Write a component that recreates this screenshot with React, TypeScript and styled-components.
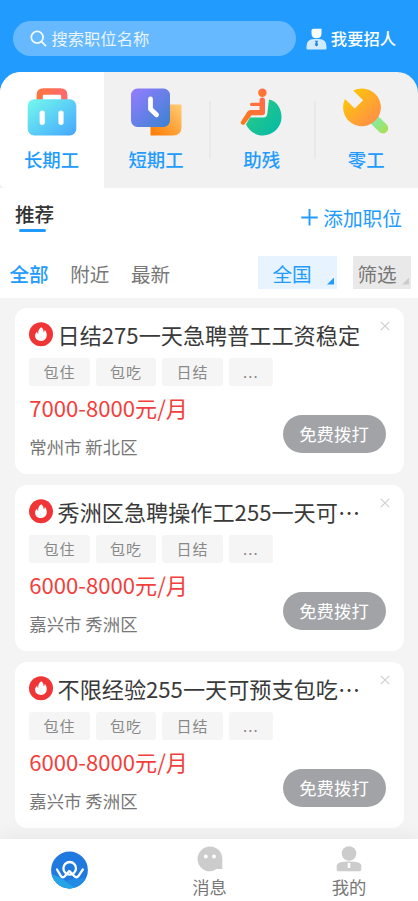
import React from "react";
import styled, { createGlobalStyle } from "styled-components";

const BLUE = "#229bff";

const GlobalStyle = createGlobalStyle`
  * { box-sizing: border-box; }
  body { margin: 0; background: #fff; }
  body, button { font-family: "Noto Sans CJK SC", "Noto Sans", sans-serif; }
  button { border: 0; padding: 0; margin: 0; background: none; color: inherit; }
  svg { display: block; flex: none; }
`;

const Page = styled.div`
  width: 418px;
  height: 901px;
  display: flex;
  flex-direction: column;
  overflow: hidden;
  background: #f4f4f4;
`;

const Header = styled.header`
  flex: none;
  background: ${BLUE};
`;

const SearchBar = styled.div`
  height: 72px;
  padding: 21px 22px 0 13px;
  display: flex;
  align-items: flex-start;
  justify-content: space-between;
`;

const SearchField = styled.div`
  width: 282.5px;
  height: 35px;
  border-radius: 18px;
  padding-left: 17px;
  display: flex;
  align-items: center;
  gap: 4.5px;
  background: #66b9ff;
  color: #e9f5ff;
  font-size: 16.3px;
  line-height: 35px;
`;

const RecruitLink = styled.button`
  height: 35px;
  display: flex;
  align-items: center;
  gap: 4px;
  color: #fff;
  font-size: 16.3px;
  font-weight: 500;
  line-height: 35px;
`;

const Categories = styled.nav`
  height: 116px;
  display: grid;
  grid-template-columns: 104px 105px 105px 104px;
  border-radius: 21px 21px 0 0;
  overflow: hidden;
  background: #f1f1f1;
`;

const Category = styled.button<{ $active?: boolean; $divided?: boolean }>`
  display: flex;
  flex-direction: column;
  align-items: center;
  padding: 14px 1px 0 0;
  background: ${(p) =>
    p.$active
      ? "#fff"
      : p.$divided
        ? "linear-gradient(#e9e9e9, #e9e9e9) 0 29px / 2px 58px no-repeat"
        : "none"};
  border-bottom-left-radius: ${(p) => (p.$active ? 5 : 0)}px;
  color: ${BLUE};
  font-size: 18.4px;
  font-weight: 500;
  line-height: 26px;

  span { margin: 10px 0 0 ${(p) => (p.$divided ? 1.5 : 0)}px; }
`;

const Filters = styled.section`
  flex: none;
  height: 110px;
  background: #fff;
`;

const TitleRow = styled.div`
  height: 60px;
  padding: 0 16px 0 15px;
  display: flex;
  justify-content: space-between;
`;

const SectionTitle = styled.h1`
  margin: 0;
  padding-top: 11px;
  display: flex;
  flex-direction: column;
  color: #333;
  font-size: 19.6px;
  font-weight: 500;
  line-height: 30px;

  &::after {
    content: "";
    width: 27px;
    height: 2.5px;
    margin: 0 0 0 4px;
    border-radius: 2px;
    background: ${BLUE};
  }
`;

const AddPosition = styled.button`
  height: 60px;
  display: flex;
  align-items: center;
  gap: 5px;
  color: ${BLUE};
  font-size: 19.7px;
  line-height: 60px;
`;

const SortRow = styled.div`
  height: 33px;
  margin-top: 8px;
  padding: 0 7px 0 9.5px;
  display: flex;
  line-height: 34px;
  font-size: 19.6px;
`;

const SortTab = styled.button<{ $active?: boolean }>`
  margin-right: 21.5px;
  color: ${(p) => (p.$active ? BLUE : "#777")};
  font-size: inherit;
  font-weight: ${(p) => (p.$active ? 500 : 400)};
  line-height: 36px;
`;

const Select = styled.button<{ $active?: boolean }>`
  width: ${(p) => (p.$active ? 79.5 : 58)}px;
  margin-left: ${(p) => (p.$active ? "auto" : "16px")};
  padding: 0 ${(p) => (p.$active ? "3px 0 15px" : "2px 0 4.5px")};
  display: flex;
  align-items: flex-start;
  justify-content: space-between;
  background: ${(p) => (p.$active ? "#e7f4ff" : "#e9e9e9")};
  color: ${(p) => (p.$active ? BLUE : "#777")};
  font-size: inherit;
  line-height: 36px;

  &::after {
    content: "";
    align-self: flex-end;
    width: 7px;
    height: 7px;
    margin-bottom: 4.5px;
    background: ${(p) => (p.$active ? BLUE : "#ccc")};
    clip-path: polygon(100% 0, 100% 100%, 0 100%);
  }
`;

const JobList = styled.main`
  flex: 1;
  min-height: 0;
  padding: 10px 15px 0;
  display: flex;
  flex-direction: column;
  gap: 11px;
  overflow: hidden;
`;

const Card = styled.article`
  flex: none;
  width: 388.5px;
  height: 166px;
  padding: 9px 14px 0 14.3px;
  border-radius: 12px;
  background: #fff;
`;

const CardHead = styled.div`
  height: 34px;
  display: flex;
  align-items: center;

  > svg:last-child { margin: 0 -0.5px 17px auto; }
`;

const JobTitle = styled.h2`
  margin: 0 0 0 4.2px;
  color: #3a3a3a;
  font-size: 22.15px;
  font-weight: 400;
  line-height: 34px;
  white-space: nowrap;
`;

const Tags = styled.div`
  margin-top: 7px;
  display: flex;
  gap: 6px;
`;

const Tag = styled.span<{ $more?: boolean }>`
  width: ${(p) => (p.$more ? 44 : 60.5)}px;
  height: 28px;
  border-radius: 3px;
  background: #f5f5f5;
  color: #888;
  font-size: 15px;
  letter-spacing: 1.1px;
  line-height: 28px;
  text-align: center;
`;

const CardFoot = styled.div`
  display: flex;
  justify-content: space-between;
`;

const Salary = styled.div`
  margin-top: 5px;
  color: #f23f3d;
  font-size: 22.1px;
  line-height: 32px;
`;

const Place = styled.div`
  margin-top: 11px;
  color: #777;
  font-size: 17.4px;
  line-height: 26px;
`;

const CallButton = styled.button`
  width: 103px;
  height: 38px;
  margin: 28.5px 4px 0 0;
  border-radius: 19px;
  background: #a1a3a7;
  color: #fff;
  font-size: 17.4px;
  line-height: 38px;
`;

const TabBar = styled.footer`
  flex: none;
  height: 62px;
  display: grid;
  grid-template-columns: 139px 141px 138px;
  background: #fff;
  box-shadow: 0 -6px 16px rgba(0, 0, 0, 0.045);
  z-index: 1;
`;

const TabItem = styled.button`
  display: flex;
  flex-direction: column;
  align-items: center;
  padding-top: 7px;
  color: #777;
  font-size: 17.3px;
  line-height: 26px;

  span { margin-top: 2px; }
`;

const HomeTab = styled(TabItem)`
  padding-top: 12px;
`;

const SearchIcon = () => (
  <svg width="17" height="17" viewBox="0 0 17 17" fill="none" stroke="#f1f9ff" strokeWidth="1.7" strokeLinecap="round">
    <circle cx="7.2" cy="7.2" r="5.9" />
    <path d="M11.6 11.6 15.5 15.6" />
  </svg>
);

const RecruiterIcon = () => (
  <svg width="21" height="22" viewBox="0 0 21 22">
    <path d="M5.500 2.500Q5.500.700 7.300.700H15.500V5.500Q15.500 10.300 10.500 10.300T5.500 5.500Z" fill="#fff" />
    <path d="M.5 20.7V18.500Q.5 11 8 11H13Q20.500 11 20.500 18.500V20.700Q20.500 21.500 19.500 21.500H1.500Q.5 21.500.5 20.700Z" fill="#d0eaff" />
    <path d="M8.800 12.700H12.200L11.300 14.200 12.200 17 10.500 18.600 8.800 17 9.700 14.200Z" fill="#2488df" />
  </svg>
);

const SuitcaseIcon = () => (
  <svg width="50" height="50" viewBox="0 0 50 50">
    <defs>
      <linearGradient id="caseBody" x1="0" y1="0" x2="1" y2="1">
        <stop stopColor="#73faec" />
        <stop offset="1" stopColor="#45a5ff" />
      </linearGradient>
      <linearGradient id="caseHandle" gradientUnits="userSpaceOnUse" x1="9" y1="0" x2="41" y2="0">
        <stop stopColor="#ff753a" />
        <stop offset="1" stopColor="#ff6a70" />
      </linearGradient>
    </defs>
    <path d="M12.700 16V9.500Q12.700 5.500 16.500 5.500H33.500Q37.300 5.500 37.300 9.500V16" fill="none" stroke="url(#caseHandle)" strokeWidth="6.300" />
    <rect x=".7" y="13.300" width="48.600" height="36.200" rx="6.500" fill="url(#caseBody)" />
    <path d="M15.200 27V36.300M34 27V36.300" stroke="#fff" strokeWidth="5.200" strokeLinecap="round" />
  </svg>
);

const ClockIcon = () => (
  <svg width="52" height="50" viewBox="0 0 52 50">
    <defs>
      <linearGradient id="clockFront" x1="0" y1="0" x2="1" y2="1">
        <stop stopColor="#967cff" />
        <stop offset="1" stopColor="#3983d1" />
      </linearGradient>
      <linearGradient id="clockBack" x1="1" y1="0" x2="0" y2="1">
        <stop stopColor="#ffce75" />
        <stop offset="1" stopColor="#ff7900" />
      </linearGradient>
    </defs>
    <path d="M20.500 18.500H51.500V41Q51.500 49.500 43 49.500H20.500Z" fill="url(#clockBack)" />
    <rect x="1" y="2.500" width="39" height="38.500" rx="6.500" fill="url(#clockFront)" />
    <path d="M20.500 13V23L26.500 28.800" fill="none" stroke="#fff" strokeWidth="4.800" strokeLinecap="round" strokeLinejoin="round" />
  </svg>
);

const WheelchairIcon = () => (
  <svg width="42" height="50" viewBox="0 0 42 50">
    <defs>
      <linearGradient id="wheel" x1="0" y1="0" x2="1" y2="1">
        <stop stopColor="#33cc80" />
        <stop offset="1" stopColor="#00b9a9" />
      </linearGradient>
      <linearGradient id="sitter" x1="1" y1="0" x2="0" y2="1">
        <stop stopColor="#ff6b50" />
        <stop offset="1" stopColor="#ff7b17" />
      </linearGradient>
    </defs>
    <path d="M29 13.500C36.500 15 41.500 22 41.500 31A18.500 18.500 0 0 1 23 49.500C15.500 49.500 9 45 6 38.500L10 31.500H23.500Q27 31.500 27.300 27.500Z" fill="url(#wheel)" />
    <g fill="url(#sitter)">
      <circle cx="22.400" cy="6.800" r="4.200" />
      <path d="M19.500 15Q19.500 11.500 22.300 11.500T25 15V26.500Q25 29.300 22 29.300H11.500L4.600 38.200Q3.600 39.500 2 38.600T.9 35.800L7.500 25.500Q8.500 24 10.500 24H19.500V20H11.500Q10 20 10 18.400T11.500 16.700H19.500Z" />
    </g>
  </svg>
);

const WrenchIcon = () => (
  <svg width="46" height="50" viewBox="0 0 46 50">
    <defs>
      <linearGradient id="wrenchHead" x1="0" y1="0" x2="1" y2="1">
        <stop stopColor="#ffd000" />
        <stop offset="1" stopColor="#ff8550" />
      </linearGradient>
      <linearGradient id="wrenchGrip" gradientUnits="userSpaceOnUse" x1="30" y1="32" x2="44" y2="46">
        <stop stopColor="#80edb0" />
        <stop offset="1" stopColor="#a9df50" />
      </linearGradient>
    </defs>
    <path d="M30 32.500 40 42.200" stroke="url(#wrenchGrip)" strokeWidth="10.500" strokeLinecap="round" />
    <path d="M10.200 4.600A18.900 18.900 0 1 1 2 13L11.700 22.600 20 14.200Z" fill="url(#wrenchHead)" />
  </svg>
);

const PlusIcon = () => (
  <svg width="17" height="18" viewBox="0 0 17 18" stroke={BLUE} strokeWidth="1.900">
    <path d="M8.500 0V16.500M.3 8.500H16.700" />
  </svg>
);

const FlameIcon = () => (
  <svg width="24" height="25" viewBox="0 0 24 25">
    <circle cx="12" cy="12.300" r="12" fill="#f03537" />
    <path d="M12.200 5.200C14.200 6.500 14.700 8.100 14.500 10.200Q15.900 9.700 15.800 7.800C17.900 10.600 18.400 13.400 17.100 16C16 18.100 14.300 19 12 19C8.600 19 6 16.900 6.100 13.800Q6.200 11.200 8.100 9.400Q8 11.100 9.200 11.900C8.900 9 10 6.600 12.200 5.200Z" fill="#fff" />
    <path d="M12 13.300Q14.300 15.200 13.500 17.200Q12 18.500 10.500 17.200Q9.800 15.200 12 13.300Z" fill="#fff2f1" />
  </svg>
);

const CloseIcon = () => (
  <svg width="10" height="10" viewBox="0 0 10 10" stroke="#cfcfcf" strokeWidth="1.200">
    <path d="M.8.8 9.200 9.200M9.200.8.8 9.200" />
  </svg>
);

const LogoIcon = () => (
  <svg width="37" height="38" viewBox="0 0 37 38">
    <defs>
      <clipPath id="disc"><circle cx="18.500" cy="19" r="18.400" /></clipPath>
    </defs>
    <g clipPath="url(#disc)">
      <path d="M0 0H37V38H0Z" fill="#2079df" />
      <path d="M0 24Q8 24 15 30Q23 27 37 27V38H0Z" fill="#228be5" />
      <path d="M0 23Q9 26 18 33L26 38H0Z" fill="#25a4e8" />
    </g>
    <g fill="none" stroke="#fff" strokeWidth="2.300" strokeLinecap="round" strokeLinejoin="round">
      <circle cx="18.700" cy="17.300" r="6.300" />
      <path d="M6 18.500 9.800 24.800Q11.800 27.600 14 25L18 20.300" />
      <path d="M18.700 20.300 23.200 25Q25.500 27.600 27.600 24.800L31.800 18.500" />
    </g>
  </svg>
);

const MessageIcon = () => (
  <svg width="26" height="26" viewBox="0 0 26 26">
    <path d="M13 .5A12.300 12.300 0 0 1 25.300 12.800V23H19.500Q16.500 25.300 13 25.300A12.400 12.400 0 0 1 13 .5Z" fill="#ccc" />
    <circle cx="8.800" cy="10.500" r="1.900" fill="#fff" />
    <circle cx="17" cy="10.500" r="1.900" fill="#fff" />
  </svg>
);

const ProfileIcon = () => (
  <svg width="26" height="26" viewBox="0 0 26 26" fill="#ccc">
    <circle cx="13" cy="7.500" r="7.300" />
    <path d="M.7 19.500Q.7 15.500 13 15.500T25.300 19.500V23.500Q25.300 25.300 23.500 25.300H2.500Q.7 25.300.7 23.500Z" />
    <path d="M11.700 17H14.300V22H11.700Z" fill="#fff" />
  </svg>
);

interface Job {
  title: string;
  salary: string;
  place: string;
}

const jobs: Job[] = [
  { title: "日结275一天急聘普工工资稳定", salary: "7000-8000元/月", place: "常州市 新北区" },
  { title: "秀洲区急聘操作工255一天可⋯", salary: "6000-8000元/月", place: "嘉兴市 秀洲区" },
  { title: "不限经验255一天可预支包吃⋯", salary: "6000-8000元/月", place: "嘉兴市 秀洲区" },
];

const JobCard = ({ job }: { job: Job }) => (
  <Card>
    <CardHead>
      <FlameIcon />
      <JobTitle>{job.title}</JobTitle>
      <CloseIcon />
    </CardHead>
    <Tags>
      <Tag>包住</Tag>
      <Tag>包吃</Tag>
      <Tag>日结</Tag>
      <Tag $more>...</Tag>
    </Tags>
    <CardFoot>
      <div>
        <Salary>{job.salary}</Salary>
        <Place>{job.place}</Place>
      </div>
      <CallButton>免费拨打</CallButton>
    </CardFoot>
  </Card>
);

export default function App() {
  return (
    <>
      <GlobalStyle />
      <Page>
        <Header>
          <SearchBar>
            <SearchField><SearchIcon />搜索职位名称</SearchField>
            <RecruitLink><RecruiterIcon />我要招人</RecruitLink>
          </SearchBar>
          <Categories>
            <Category $active><SuitcaseIcon /><span>长期工</span></Category>
            <Category><ClockIcon /><span>短期工</span></Category>
            <Category $divided><WheelchairIcon /><span>助残</span></Category>
            <Category $divided><WrenchIcon /><span>零工</span></Category>
          </Categories>
        </Header>
        <Filters>
          <TitleRow>
            <SectionTitle>推荐</SectionTitle>
            <AddPosition><PlusIcon />添加职位</AddPosition>
          </TitleRow>
          <SortRow>
            <SortTab $active>全部</SortTab>
            <SortTab>附近</SortTab>
            <SortTab>最新</SortTab>
            <Select $active>全国</Select>
            <Select>筛选</Select>
          </SortRow>
        </Filters>
        <JobList>
          {jobs.map((job, i) => <JobCard key={i} job={job} />)}
        </JobList>
        <TabBar>
          <HomeTab><LogoIcon /></HomeTab>
          <TabItem><MessageIcon /><span>消息</span></TabItem>
          <TabItem><ProfileIcon /><span>我的</span></TabItem>
        </TabBar>
      </Page>
    </>
  );
}
